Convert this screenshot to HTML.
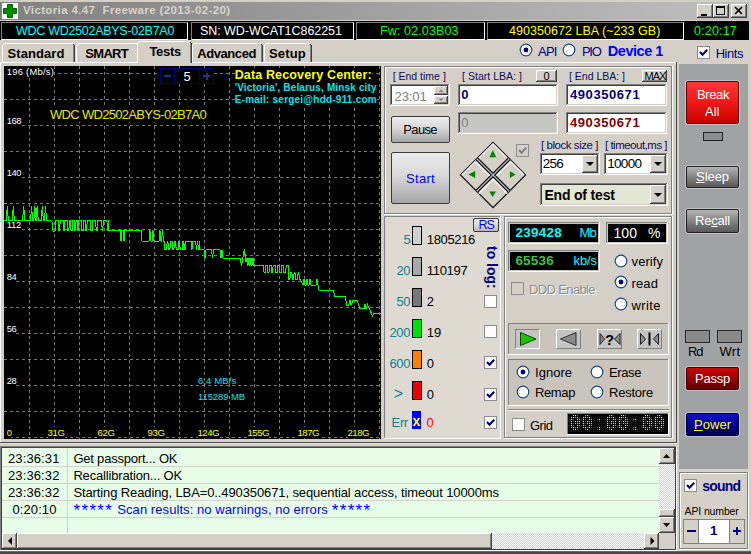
<!DOCTYPE html>
<html><head><meta charset="utf-8"><title>Victoria 4.47</title><style>
html,body{margin:0;padding:0}
body{width:751px;height:554px;overflow:hidden;background:#d4d0c8;position:relative;font-family:'Liberation Sans', sans-serif;}
#app{position:absolute;left:0;top:0;width:751px;height:554px;overflow:hidden;background:#d4d0c8}
#app div,#app span,#app svg{position:absolute;box-sizing:border-box}
#app span{white-space:pre}
</style></head><body><div id="app">
<div style="left:0px;top:2px;width:751px;height:18px;background:linear-gradient(90deg,#808080 0%,#c0c0c0 100%)"></div>
<div style="left:2px;top:3px;width:16px;height:16px;background:#fff"></div>
<svg style="left:2px;top:3px" width="16" height="16" viewBox="0 0 16 16"><path d="M5.500 1.500h5v4h4v5h-4v4h-5v-4h-4v-5h4z" fill="#008a00" stroke="#006400" stroke-width="1"/></svg>
<span style="left:23.0px;top:4.1px;font-size:11.5px;line-height:13.5px;color:#d8d4cc;font-weight:bold;letter-spacing:0.37px;">Victoria 4.47  Freeware (2013-02-20)</span>
<div style="left:697px;top:4px;width:16px;height:14px;background:#404040"></div>
<div style="left:697px;top:4px;width:15px;height:13px;background:#fff"></div>
<div style="left:698px;top:5px;width:14px;height:12px;background:#808080"></div>
<div style="left:698px;top:5px;width:13px;height:11px;background:#d4d0c8"></div>
<div style="left:713px;top:4px;width:16px;height:14px;background:#404040"></div>
<div style="left:713px;top:4px;width:15px;height:13px;background:#fff"></div>
<div style="left:714px;top:5px;width:14px;height:12px;background:#808080"></div>
<div style="left:714px;top:5px;width:13px;height:11px;background:#d4d0c8"></div>
<div style="left:731px;top:4px;width:16px;height:14px;background:#404040"></div>
<div style="left:731px;top:4px;width:15px;height:13px;background:#fff"></div>
<div style="left:732px;top:5px;width:14px;height:12px;background:#808080"></div>
<div style="left:732px;top:5px;width:13px;height:11px;background:#d4d0c8"></div>
<div style="left:701px;top:14px;width:6px;height:2px;background:#000"></div>
<div style="left:716px;top:6px;width:9px;height:9px;border:1px solid #000;border-top:2px solid #000"></div>
<svg style="left:731px;top:4px" width="16" height="14"><path d="M4 3l7 7M11 3l-7 7" stroke="#000" stroke-width="1.6" fill="none"/></svg>
<div style="left:0px;top:21px;width:751px;height:19px;background:#000"></div>
<div style="left:1px;top:22px;width:187px;height:18px;border:1px solid #fff;border-top-color:#808080;border-left-color:#808080"></div>
<div style="left:191px;top:22px;width:163px;height:18px;border:1px solid #fff;border-top-color:#808080;border-left-color:#808080"></div>
<div style="left:356px;top:22px;width:129px;height:18px;border:1px solid #fff;border-top-color:#808080;border-left-color:#808080"></div>
<div style="left:487px;top:22px;width:197px;height:18px;border:1px solid #fff;border-top-color:#808080;border-left-color:#808080"></div>
<span style="left:16.0px;top:24.2px;font-size:12.5px;line-height:14.5px;color:#00ffff;letter-spacing:-0.28px;">WDC WD2502ABYS-02B7A0</span>
<span style="left:200.0px;top:24.2px;font-size:12.5px;line-height:14.5px;color:#ffffff;letter-spacing:-0.05px;">SN: WD-WCAT1C862251</span>
<span style="left:380.0px;top:24.2px;font-size:12.5px;line-height:14.5px;color:#00ff00;letter-spacing:0.12px;">Fw: 02.03B03</span>
<span style="left:509.0px;top:24.2px;font-size:12.5px;line-height:14.5px;color:#ffff00;letter-spacing:0.04px;">490350672 LBA (~233 GB)</span>
<span style="left:694.0px;top:24.2px;font-size:12.5px;line-height:14.5px;color:#00ff00;letter-spacing:0.18px;">0:20:17</span>
<div style="left:0px;top:62px;width:677px;height:1px;background:#fff"></div>
<div style="left:2px;top:45px;width:1px;height:17px;background:#fff"></div>
<div style="left:3px;top:44px;width:1px;height:1px;background:#fff"></div>
<div style="left:4px;top:43px;width:69px;height:1px;background:#fff"></div>
<div style="left:73px;top:44px;width:1px;height:1px;background:#404040"></div>
<div style="left:74px;top:45px;width:1px;height:17px;background:#404040"></div>
<div style="left:73px;top:45px;width:1px;height:17px;background:#808080"></div>
<span style="left:7.6px;top:45.8px;font-size:13px;line-height:15px;color:#000;font-weight:bold;letter-spacing:0.07px;">Standard</span>
<div style="left:76px;top:45px;width:1px;height:17px;background:#fff"></div>
<div style="left:77px;top:44px;width:1px;height:1px;background:#fff"></div>
<div style="left:78px;top:43px;width:59px;height:1px;background:#fff"></div>
<div style="left:137px;top:44px;width:1px;height:1px;background:#404040"></div>
<div style="left:138px;top:45px;width:1px;height:17px;background:#404040"></div>
<div style="left:137px;top:45px;width:1px;height:17px;background:#808080"></div>
<span style="left:85.3px;top:45.8px;font-size:13px;line-height:15px;color:#000;font-weight:bold;letter-spacing:-0.70px;">SMART</span>
<div style="left:192px;top:45px;width:1px;height:17px;background:#fff"></div>
<div style="left:193px;top:44px;width:1px;height:1px;background:#fff"></div>
<div style="left:194px;top:43px;width:67px;height:1px;background:#fff"></div>
<div style="left:261px;top:44px;width:1px;height:1px;background:#404040"></div>
<div style="left:262px;top:45px;width:1px;height:17px;background:#404040"></div>
<div style="left:261px;top:45px;width:1px;height:17px;background:#808080"></div>
<span style="left:197.2px;top:45.8px;font-size:13px;line-height:15px;color:#000;font-weight:bold;letter-spacing:-0.42px;">Advanced</span>
<div style="left:264px;top:45px;width:1px;height:17px;background:#fff"></div>
<div style="left:265px;top:44px;width:1px;height:1px;background:#fff"></div>
<div style="left:266px;top:43px;width:44px;height:1px;background:#fff"></div>
<div style="left:310px;top:44px;width:1px;height:1px;background:#404040"></div>
<div style="left:311px;top:45px;width:1px;height:17px;background:#404040"></div>
<div style="left:310px;top:45px;width:1px;height:17px;background:#808080"></div>
<span style="left:269.0px;top:45.8px;font-size:13px;line-height:15px;color:#000;font-weight:bold;letter-spacing:0.14px;">Setup</span>
<div style="left:137px;top:41px;width:55px;height:22px;background:#d4d0c8"></div>
<div style="left:137px;top:43px;width:1px;height:20px;background:#fff"></div>
<div style="left:138px;top:42px;width:1px;height:1px;background:#fff"></div>
<div style="left:139px;top:41px;width:51px;height:1px;background:#fff"></div>
<div style="left:190px;top:42px;width:1px;height:1px;background:#404040"></div>
<div style="left:191px;top:43px;width:1px;height:20px;background:#404040"></div>
<div style="left:190px;top:43px;width:1px;height:20px;background:#808080"></div>
<span style="left:149.4px;top:43.8px;font-size:13px;line-height:15px;color:#000;font-weight:bold;letter-spacing:-0.28px;">Tests</span>
<svg style="left:517.7px;top:42.4px" width="16" height="16"><circle cx="8" cy="8" r="5.8" fill="#fff" stroke="#1c4a80" stroke-width="1.2"/><circle cx="8" cy="8" r="2.4" fill="#000080"/></svg>
<span style="left:538.0px;top:43.7px;font-size:13px;line-height:15px;color:#000080;letter-spacing:-0.79px;">API</span>
<svg style="left:561.3px;top:42.4px" width="16" height="16"><circle cx="8" cy="8" r="5.8" fill="#fff" stroke="#1c4a80" stroke-width="1.2"/></svg>
<span style="left:581.9px;top:43.7px;font-size:13px;line-height:15px;color:#000080;letter-spacing:-1.20px;">PIO</span>
<span style="left:607.8px;top:42.7px;font-size:14.5px;line-height:16.5px;color:#0000ff;font-weight:bold;letter-spacing:-0.46px;">Device 1</span>
<div style="left:697px;top:46px;width:13px;height:13px;background:#fff;border:1px solid #8c8c8c"></div>
<svg style="left:697px;top:46px" width="13" height="13"><path d="M3 6l2.500 2.700l4.700-5" stroke="#000080" stroke-width="2.100" fill="none"/></svg>
<span style="left:715.7px;top:45.5px;font-size:13px;line-height:15px;color:#000080;letter-spacing:-0.47px;">Hints</span>
<div style="left:0px;top:63px;width:1px;height:380px;background:#fff"></div>
<div style="left:4px;top:66px;width:377px;height:373px;background:#000"></div>
<svg style="left:4px;top:66px" width="377" height="373" viewBox="0 0 377 373"><g stroke="#787878" stroke-width="1" stroke-dasharray="3 3" fill="none" shape-rendering="crispEdges"><path d="M0 7.5H377"/><path d="M0 33.5H377"/><path d="M0 59.5H377"/><path d="M0 85.5H377"/><path d="M0 111.5H377"/><path d="M0 137.5H377"/><path d="M0 163.5H377"/><path d="M0 189.5H377"/><path d="M0 215.5H377"/><path d="M0 241.5H377"/><path d="M0 267.5H377"/><path d="M0 293.5H377"/><path d="M0 319.5H377"/><path d="M0 345.5H377"/><path d="M0 371.5H377"/><path d="M25.5 0V373"/><path d="M50.5 0V373"/><path d="M75.5 0V373"/><path d="M100.5 0V373"/><path d="M125.5 0V373"/><path d="M150.5 0V373"/><path d="M175.5 0V373"/><path d="M200.5 0V373"/><path d="M225.5 0V373"/><path d="M250.5 0V373"/><path d="M275.5 0V373"/><path d="M300.5 0V373"/><path d="M325.5 0V373"/><path d="M350.5 0V373"/><path d="M375.5 0V373"/></g></svg>
<span style="left:6.7px;top:66.1px;font-size:9.4px;line-height:11.4px;color:#fff;letter-spacing:0.27px;background:#000;padding-left:3px;margin-left:-3px;">196 (Mb/s)</span>
<span style="left:6.7px;top:115.1px;font-size:9.4px;line-height:11.4px;color:#fff;letter-spacing:-0.45px;background:#000;padding-left:3px;margin-left:-3px;">168</span>
<span style="left:6.7px;top:167.1px;font-size:9.4px;line-height:11.4px;color:#fff;letter-spacing:-0.45px;background:#000;padding-left:3px;margin-left:-3px;">140</span>
<span style="left:6.7px;top:219.1px;font-size:9.4px;line-height:11.4px;color:#fff;letter-spacing:-0.22px;background:#000;padding-left:3px;margin-left:-3px;">112</span>
<span style="left:6.7px;top:271.1px;font-size:9.4px;line-height:11.4px;color:#fff;letter-spacing:-0.47px;background:#000;padding-left:3px;margin-left:-3px;">84</span>
<span style="left:6.7px;top:323.1px;font-size:9.4px;line-height:11.4px;color:#fff;letter-spacing:-0.47px;background:#000;padding-left:3px;margin-left:-3px;">56</span>
<span style="left:6.7px;top:375.4px;font-size:9.4px;line-height:11.4px;color:#fff;letter-spacing:-0.47px;background:#000;padding-left:3px;margin-left:-3px;">28</span>
<span style="left:6.7px;top:427.4px;font-size:9.4px;line-height:11.4px;color:#ffff00;letter-spacing:-0.42px;background:#000;padding-left:3px;margin-left:-3px;">0</span>
<span style="left:47.5px;top:426.7px;font-size:9.6px;line-height:11.6px;color:#ffff00;letter-spacing:-0.38px;background:#000;">31G</span>
<span style="left:97.5px;top:426.7px;font-size:9.6px;line-height:11.6px;color:#ffff00;letter-spacing:-0.38px;background:#000;">62G</span>
<span style="left:147.5px;top:426.7px;font-size:9.6px;line-height:11.6px;color:#ffff00;letter-spacing:-0.38px;background:#000;">93G</span>
<span style="left:197.5px;top:426.7px;font-size:9.6px;line-height:11.6px;color:#ffff00;letter-spacing:-0.52px;background:#000;">124G</span>
<span style="left:247.5px;top:426.7px;font-size:9.6px;line-height:11.6px;color:#ffff00;letter-spacing:-0.52px;background:#000;">155G</span>
<span style="left:297.5px;top:426.7px;font-size:9.6px;line-height:11.6px;color:#ffff00;letter-spacing:-0.52px;background:#000;">187G</span>
<span style="left:347.5px;top:426.7px;font-size:9.6px;line-height:11.6px;color:#ffff00;letter-spacing:-0.52px;background:#000;">218G</span>
<span style="left:198.0px;top:374.7px;font-size:9.6px;line-height:11.6px;color:#00e0f0;letter-spacing:0.06px;">6,4 MB/s</span>
<span style="left:198.0px;top:390.6px;font-size:9.6px;line-height:11.6px;color:#00e0f0;letter-spacing:-0.15px;">115289 MB</span>
<span style="left:50.0px;top:107.0px;font-size:13px;line-height:15px;color:#e8e800;letter-spacing:-0.69px;background:#000;">WDC WD2502ABYS-02B7A0</span>
<span style="left:234.7px;top:68.1px;font-size:12.5px;line-height:14.5px;color:#ffff00;font-weight:bold;letter-spacing:0.14px;background:#000;">Data Recovery Center:</span>
<span style="left:234.7px;top:81.7px;font-size:10px;line-height:12px;color:#00e5ee;font-weight:bold;letter-spacing:0.15px;background:#000;">&#x27;Victoria&#x27;, Belarus, Minsk city</span>
<span style="left:234.7px;top:93.8px;font-size:10px;line-height:12px;color:#00e5ee;font-weight:bold;letter-spacing:0.22px;background:#000;">E-mail: sergei@hdd-911.com</span>
<svg style="left:4px;top:66px" width="377" height="373" viewBox="0 0 377 373"><polyline points="0.0,154.0 2.3,154.0 3.3,140.0 4.3,154.0 8.3,154.0 9.3,140.0 10.3,154.0 18.7,154.0 19.7,140.0 20.7,154.0 26.6,154.0 27.6,140.0 28.6,154.0 29.9,154.0 30.9,140.0 31.9,154.0 32.2,154.0 33.2,140.0 34.2,154.0 37.3,154.0 38.3,140.0 39.3,154.0 40.5,154.0 41.5,140.0 42.5,154.0 46.0,154.0 48.0,156.0 49.0,165.0 51.0,165.0 52.0,154.0 52.0,154.0 54.5,154.0 55.0,164.6 55.7,164.6 56.2,154.0 59.2,154.0 59.7,164.6 60.3,164.6 60.8,154.0 63.4,154.0 63.9,164.6 64.9,164.6 65.4,154.0 66.6,154.0 67.1,164.6 68.4,164.6 68.9,154.0 70.0,154.0 70.5,164.6 71.6,164.6 72.1,154.0 73.3,154.0 73.8,164.6 74.5,164.6 75.0,154.0 77.2,154.0 77.7,164.6 79.5,164.6 80.0,154.0 81.3,154.0 81.8,164.6 82.7,164.6 83.2,154.0 86.1,154.0 86.6,164.6 88.5,164.6 89.0,154.0 91.7,154.0 92.2,164.6 93.3,164.6 93.8,154.0 97.7,154.0 98.2,164.6 98.8,164.6 99.3,154.0 102.9,154.0 103.4,164.6 104.0,164.6 104.0,154.0 104.7,164.3 116.0,164.3 117.0,175.0 118.0,164.3 119.0,164.3 120.0,175.0 121.0,164.3 137.0,164.3 138.0,175.0 145.0,175.0 146.0,164.5 147.0,175.0 148.0,175.0 149.0,164.5 150.0,175.0 155.0,175.0 156.0,164.5 157.0,175.0 157.5,175.0 158.5,164.5 159.5,175.0 160.0,175.0 161.0,183.6 161.0,183.6 162.7,183.6 163.2,175.0 163.9,175.0 164.4,183.6 165.9,183.6 166.4,175.0 168.1,175.0 168.6,183.6 169.9,183.6 170.4,175.0 171.7,175.0 172.2,183.6 174.2,183.6 174.7,175.0 175.7,175.0 176.2,183.6 178.1,183.6 178.6,175.0 179.2,175.0 179.7,183.6 180.7,183.6 181.2,175.0 181.0,175.0 181.0,183.6 182.0,175.0 187.0,175.0 188.0,183.6 189.0,175.0 191.5,175.0 192.5,183.6 193.5,175.0 193.5,175.0 194.5,183.6 195.5,175.0 195.0,175.0 196.0,183.6 200.0,183.6 201.0,192.3 202.0,183.6 207.5,183.6 208.5,192.3 209.5,183.6 216.0,183.6 217.0,192.3 218.0,183.6 218.0,183.6 219.0,192.3 236.0,192.3 237.5,199.6 240.3,183.0 242.0,196.0 243.0,192.3 244.0,199.6 245.0,192.3 245.0,192.3 246.0,199.6 247.0,192.3 247.0,192.3 248.0,199.6 249.0,192.3 249.0,192.3 250.0,199.6 257.0,199.6 257.0,199.6 259.5,199.6 260.0,206.4 261.2,206.4 261.7,199.6 263.1,199.6 263.6,206.4 265.0,206.4 265.5,199.6 267.2,199.6 267.7,206.4 268.6,206.4 269.1,199.6 271.3,199.6 271.8,206.4 273.4,206.4 273.9,199.6 275.2,199.6 275.7,206.4 277.1,206.4 277.6,199.6 279.4,199.6 279.9,206.4 281.7,206.4 282.2,199.6 284.0,199.6 284.0,199.6 284.0,206.5 284.0,213.5 285.9,213.5 286.4,206.5 287.9,206.5 288.4,213.5 289.6,213.5 290.1,206.5 291.0,206.5 291.5,213.5 293.6,213.5 294.1,206.5 294.8,206.5 295.3,213.5 296.0,213.5 296.0,213.5 296.5,213.5 299.0,219.0 300.0,213.5 301.0,219.0 302.0,219.0 303.0,213.5 304.0,219.0 305.0,219.0 306.0,213.5 307.0,219.0 312.0,219.0 313.0,213.5 314.0,219.0 314.0,219.0 315.0,224.0 329.5,224.0 330.5,230.5 341.5,230.5 342.5,239.3 344.5,239.3 346.0,234.5 347.0,239.0 349.0,234.5 353.0,234.5 356.0,242.8 360.0,242.8 361.0,238.0 362.0,242.8 363.5,238.5 365.0,242.0 368.5,249.8 370.0,247.3 376.5,247.3" fill="none" stroke="#00ff00" stroke-width="1" stroke-linejoin="miter" shape-rendering="crispEdges"/></svg>
<div style="left:160px;top:68px;width:54px;height:16px;border:1px solid #000080;background:#000"></div>
<div style="left:174px;top:68px;width:1px;height:16px;background:#000080"></div>
<div style="left:199px;top:68px;width:1px;height:16px;background:#000080"></div>
<div style="left:164px;top:75px;width:7px;height:2px;background:#203090"></div>
<div style="left:203px;top:75px;width:7px;height:2px;background:#203090"></div>
<div style="left:205.5px;top:72.5px;width:2.0px;height:7.0px;background:#203090"></div>
<span style="left:183.5px;top:69.0px;font-size:13px;line-height:15px;color:#fff;letter-spacing:0.00px;">5</span>
<div style="left:676px;top:62px;width:1px;height:381px;background:#484848"></div>
<div style="left:0px;top:442px;width:677px;height:1px;background:#505050"></div>
<div style="left:0px;top:443px;width:677px;height:1px;background:#e6e2da"></div>
<div style="left:384px;top:66px;width:289px;height:149px;background:#fff"></div>
<div style="left:384px;top:66px;width:288px;height:148px;background:#808080"></div>
<div style="left:385px;top:67px;width:286px;height:146px;background:#fff"></div>
<div style="left:386px;top:68px;width:285px;height:145px;background:#d4d0c8"></div>
<span style="left:392.7px;top:69.9px;font-size:10.5px;line-height:12.5px;color:#0c0c58;letter-spacing:-0.00px;">[ End time ]</span>
<div style="left:390px;top:84px;width:60px;height:22px;background:#fff"></div>
<div style="left:390px;top:84px;width:59px;height:21px;background:#808080"></div>
<div style="left:391px;top:85px;width:58px;height:20px;background:#d4d0c8"></div>
<div style="left:391px;top:85px;width:57px;height:19px;background:#404040"></div>
<div style="left:392px;top:86px;width:56px;height:18px;background:#fff"></div>
<span style="left:394.6px;top:88.6px;font-size:13px;line-height:15px;color:#808080;letter-spacing:-0.13px;">23:01</span>
<div style="left:434px;top:86px;width:14px;height:9px;background:#404040"></div>
<div style="left:434px;top:86px;width:13px;height:8px;background:#fff"></div>
<div style="left:435px;top:87px;width:12px;height:7px;background:#808080"></div>
<div style="left:435px;top:87px;width:11px;height:6px;background:#d4d0c8"></div>
<div style="left:434px;top:96px;width:14px;height:8px;background:#404040"></div>
<div style="left:434px;top:96px;width:13px;height:7px;background:#fff"></div>
<div style="left:435px;top:97px;width:12px;height:6px;background:#808080"></div>
<div style="left:435px;top:97px;width:11px;height:5px;background:#d4d0c8"></div>
<svg style="left:434px;top:86px" width="14" height="19"><path d="M4.500 6L7 3.500L9.500 6zM4.500 12.500L7 15L9.500 12.500z" fill="#808080"/></svg>
<span style="left:462.0px;top:69.9px;font-size:10.5px;line-height:12.5px;color:#0c0c58;letter-spacing:0.03px;">[ Start LBA: ]</span>
<div style="left:536px;top:70px;width:21px;height:12px;background:#404040"></div>
<div style="left:536px;top:70px;width:20px;height:11px;background:#fff"></div>
<div style="left:537px;top:71px;width:19px;height:10px;background:#808080"></div>
<div style="left:537px;top:71px;width:18px;height:9px;background:#d4d0c8"></div>
<span style="left:543.5px;top:69.7px;font-size:11px;line-height:13px;color:#000;letter-spacing:0.00px;">0</span>
<div style="left:458px;top:84px;width:100px;height:22px;background:#fff"></div>
<div style="left:458px;top:84px;width:99px;height:21px;background:#808080"></div>
<div style="left:459px;top:85px;width:98px;height:20px;background:#d4d0c8"></div>
<div style="left:459px;top:85px;width:97px;height:19px;background:#404040"></div>
<div style="left:460px;top:86px;width:96px;height:18px;background:#fff"></div>
<span style="left:461.3px;top:87.2px;font-size:13px;line-height:15px;color:#000080;font-weight:bold;letter-spacing:0.47px;">0</span>
<span style="left:569.0px;top:69.9px;font-size:10.5px;line-height:12.5px;color:#0c0c58;letter-spacing:-0.00px;">[ End LBA: ]</span>
<div style="left:642px;top:70px;width:25px;height:12px;background:#404040"></div>
<div style="left:642px;top:70px;width:24px;height:11px;background:#fff"></div>
<div style="left:643px;top:71px;width:23px;height:10px;background:#808080"></div>
<div style="left:643px;top:71px;width:22px;height:9px;background:#d4d0c8"></div>
<span style="left:644.5px;top:69.7px;font-size:11px;line-height:13px;color:#000;letter-spacing:-0.95px;">MAX</span>
<div style="left:566px;top:84px;width:101px;height:22px;background:#fff"></div>
<div style="left:566px;top:84px;width:100px;height:21px;background:#808080"></div>
<div style="left:567px;top:85px;width:99px;height:20px;background:#d4d0c8"></div>
<div style="left:567px;top:85px;width:98px;height:19px;background:#404040"></div>
<div style="left:568px;top:86px;width:97px;height:18px;background:#fff"></div>
<span style="left:570.0px;top:87.4px;font-size:13px;line-height:15px;color:#000080;font-weight:bold;letter-spacing:0.57px;">490350671</span>
<div style="left:391px;top:116px;width:59px;height:27px;border:1px solid #3c3c3c;border-radius:2px;background:linear-gradient(180deg,#ececec 0%,#d8d8d8 45%,#a4a4a4 100%)"></div>
<span style="left:403.3px;top:121.7px;font-size:13px;line-height:15px;color:#000;letter-spacing:-0.64px;">Pause</span>
<div style="left:458px;top:112px;width:100px;height:22px;background:#fff"></div>
<div style="left:458px;top:112px;width:99px;height:21px;background:#808080"></div>
<div style="left:459px;top:113px;width:98px;height:20px;background:#d4d0c8"></div>
<div style="left:459px;top:113px;width:97px;height:19px;background:#404040"></div>
<div style="left:460px;top:114px;width:96px;height:18px;background:#c6c6c2"></div>
<span style="left:461.3px;top:115.2px;font-size:13px;line-height:15px;color:#808080;letter-spacing:-0.03px;">0</span>
<div style="left:566px;top:112px;width:101px;height:22px;background:#fff"></div>
<div style="left:566px;top:112px;width:100px;height:21px;background:#808080"></div>
<div style="left:567px;top:113px;width:99px;height:20px;background:#d4d0c8"></div>
<div style="left:567px;top:113px;width:98px;height:19px;background:#404040"></div>
<div style="left:568px;top:114px;width:97px;height:18px;background:#fff"></div>
<span style="left:570.0px;top:115.2px;font-size:13px;line-height:15px;color:#800000;font-weight:bold;letter-spacing:0.57px;">490350671</span>
<div style="left:391px;top:152px;width:59px;height:52px;border:1px solid #3c3c3c;border-radius:2px;background:linear-gradient(180deg,#ececec 0%,#d8d8d8 45%,#a4a4a4 100%)"></div>
<span style="left:406.0px;top:170.7px;font-size:13px;line-height:15px;color:#0000ff;letter-spacing:0.31px;">Start</span>
<svg style="left:458px;top:140px" width="70" height="70" viewBox="-35 -35 70 70">
<g transform="rotate(45)">
<rect x="-23" y="-23" width="46" height="46" fill="#d4d0c8" stroke="#101010" stroke-width="1.2"/>
<path d="M-22 22V-22H22" fill="none" stroke="#fff" stroke-width="1.2"/>
<path d="M1.800 22V1.800H22M-22 1.800H-1M1.800 -22V-1" fill="none" stroke="#fff" stroke-width="1.2" transform="translate(1.200 1.200)"/>
<path d="M0 -23V23M-23 0H23" stroke="#101010" stroke-width="3.800"/>
<path d="M0 -23V23M-23 0H23" stroke="#b8b8b8" stroke-width="1.300"/>
</g>
<path d="M-0.200 -24.700l3.400 7h-6.800z M-0.400 22l3.300 -5.500h-6.600z M-24.400 -0.400l6.600 -3.500v7z M22.500 -0.400l-5.600 -3.300v6.600z" fill="#008000"/>
</svg>
<div style="left:516px;top:144px;width:13px;height:13px;background:#d4d0c8;border:1px solid #8c8c8c"></div>
<svg style="left:516px;top:144px" width="13" height="13"><path d="M3 6l2.500 2.700l4.700-5" stroke="#808080" stroke-width="2.100" fill="none"/></svg>
<span style="left:541.0px;top:139.3px;font-size:11.5px;line-height:13.5px;color:#0c0c58;letter-spacing:-0.45px;">[ block size ]</span>
<span style="left:605.0px;top:139.3px;font-size:11.5px;line-height:13.5px;color:#0c0c58;letter-spacing:-0.50px;">[ timeout,ms ]</span>
<div style="left:540px;top:153px;width:60px;height:22px;background:#fff"></div>
<div style="left:540px;top:153px;width:59px;height:21px;background:#808080"></div>
<div style="left:541px;top:154px;width:58px;height:20px;background:#d4d0c8"></div>
<div style="left:541px;top:154px;width:57px;height:19px;background:#404040"></div>
<div style="left:542px;top:155px;width:56px;height:18px;background:#fff"></div>
<div style="left:582px;top:155px;width:16px;height:18px;background:#404040"></div>
<div style="left:582px;top:155px;width:15px;height:17px;background:#fff"></div>
<div style="left:583px;top:156px;width:14px;height:16px;background:#808080"></div>
<div style="left:583px;top:156px;width:13px;height:15px;background:#d4d0c8"></div>
<svg style="left:585px;top:161.0px" width="10" height="6"><path d="M1 1h8l-4 4z" fill="#000"/></svg>
<span style="left:542.8px;top:156.1px;font-size:13.5px;line-height:15.5px;color:#000;letter-spacing:-0.78px;">256</span>
<div style="left:604px;top:153px;width:64px;height:22px;background:#fff"></div>
<div style="left:604px;top:153px;width:63px;height:21px;background:#808080"></div>
<div style="left:605px;top:154px;width:62px;height:20px;background:#d4d0c8"></div>
<div style="left:605px;top:154px;width:61px;height:19px;background:#404040"></div>
<div style="left:606px;top:155px;width:60px;height:18px;background:#fff"></div>
<div style="left:650px;top:155px;width:16px;height:18px;background:#404040"></div>
<div style="left:650px;top:155px;width:15px;height:17px;background:#fff"></div>
<div style="left:651px;top:156px;width:14px;height:16px;background:#808080"></div>
<div style="left:651px;top:156px;width:13px;height:15px;background:#d4d0c8"></div>
<svg style="left:653px;top:161.0px" width="10" height="6"><path d="M1 1h8l-4 4z" fill="#000"/></svg>
<span style="left:607.2px;top:156.1px;font-size:13.5px;line-height:15.5px;color:#000;letter-spacing:-0.67px;">10000</span>
<div style="left:540px;top:183px;width:128px;height:23px;background:#fff"></div>
<div style="left:540px;top:183px;width:127px;height:22px;background:#808080"></div>
<div style="left:541px;top:184px;width:126px;height:21px;background:#d4d0c8"></div>
<div style="left:541px;top:184px;width:125px;height:20px;background:#404040"></div>
<div style="left:542px;top:185px;width:124px;height:19px;background:#e4e6d4"></div>
<div style="left:650px;top:185px;width:16px;height:19px;background:#404040"></div>
<div style="left:650px;top:185px;width:15px;height:18px;background:#fff"></div>
<div style="left:651px;top:186px;width:14px;height:17px;background:#808080"></div>
<div style="left:651px;top:186px;width:13px;height:16px;background:#d4d0c8"></div>
<svg style="left:653px;top:191.5px" width="10" height="6"><path d="M1 1h8l-4 4z" fill="#000"/></svg>
<span style="left:544.4px;top:186.6px;font-size:14px;line-height:16px;color:#000;font-weight:bold;letter-spacing:-0.18px;">End of test</span>
<div style="left:384px;top:216px;width:117px;height:223px;background:#fff"></div>
<div style="left:384px;top:216px;width:116px;height:222px;background:#808080"></div>
<div style="left:385px;top:217px;width:115px;height:221px;background:#dedad2"></div>
<div style="left:473px;top:218px;width:26px;height:14px;border:1px solid #3c3c3c;border-radius:2px;background:linear-gradient(180deg,#ececec 0%,#dcdad6 50%,#bcb8b0 100%)"></div>
<span style="left:478.6px;top:218.0px;font-size:12.5px;line-height:14.5px;color:#0000ff;letter-spacing:-1.19px;">RS</span>
<div style="left:412px;top:226px;width:10px;height:19px;background:#d0d0d0;border:1px solid #000"></div>
<span style="left:426.8px;top:231.7px;font-size:13px;line-height:15px;color:#000;letter-spacing:-0.35px;">1805216</span>
<div style="left:412px;top:257px;width:10px;height:19px;background:#a8a8ac;border:1px solid #000"></div>
<span style="left:426.8px;top:262.7px;font-size:13px;line-height:15px;color:#000;letter-spacing:-0.32px;">110197</span>
<div style="left:412px;top:288px;width:10px;height:19px;background:#787878;border:1px solid #000"></div>
<span style="left:426.8px;top:293.7px;font-size:13px;line-height:15px;color:#000;letter-spacing:0.00px;">2</span>
<div style="left:412px;top:319px;width:10px;height:19px;background:#00e400;border:1px solid #000"></div>
<span style="left:426.8px;top:324.7px;font-size:13px;line-height:15px;color:#000;letter-spacing:0.00px;">19</span>
<div style="left:412px;top:350px;width:10px;height:19px;background:#ff8000;border:1px solid #000"></div>
<span style="left:426.8px;top:355.7px;font-size:13px;line-height:15px;color:#000;letter-spacing:0.00px;">0</span>
<div style="left:412px;top:381px;width:10px;height:19px;background:#ee0000;border:1px solid #000"></div>
<span style="left:426.8px;top:386.7px;font-size:13px;line-height:15px;color:#000;letter-spacing:0.00px;">0</span>
<span style="left:403.5px;top:231.6px;font-size:13px;line-height:15px;color:#0c8090;letter-spacing:-0.73px;">5</span>
<span style="left:396.5px;top:262.6px;font-size:13px;line-height:15px;color:#0c8090;letter-spacing:-0.48px;">20</span>
<span style="left:396.5px;top:293.6px;font-size:13px;line-height:15px;color:#0c8090;letter-spacing:-0.48px;">50</span>
<span style="left:389.5px;top:324.6px;font-size:13px;line-height:15px;color:#0c8090;letter-spacing:-0.40px;">200</span>
<span style="left:389.5px;top:355.6px;font-size:13px;line-height:15px;color:#0c8090;letter-spacing:-0.40px;">600</span>
<span style="left:393.8px;top:384.8px;font-size:16px;line-height:18px;color:#0c8090;letter-spacing:-1.20px;">&gt;</span>
<span style="left:391.6px;top:415.0px;font-size:13px;line-height:15px;color:#0c8090;letter-spacing:-0.38px;">Err</span>
<div style="left:412px;top:411px;width:9px;height:18px;background:#0000ff"></div>
<span style="left:412.5px;top:413.1px;font-size:14px;line-height:16px;color:#ffff00;font-weight:bold;letter-spacing:0.20px;">x</span>
<span style="left:426.6px;top:415.0px;font-size:13px;line-height:15px;color:#ff0000;letter-spacing:0.00px;">0</span>
<div style="left:484px;top:295px;width:13px;height:13px;background:#fff;border:1px solid #8c8c8c"></div>
<div style="left:484px;top:325px;width:13px;height:13px;background:#fff;border:1px solid #8c8c8c"></div>
<div style="left:484px;top:356px;width:13px;height:13px;background:#fff;border:1px solid #8c8c8c"></div>
<svg style="left:484px;top:356px" width="13" height="13"><path d="M3 6l2.500 2.700l4.700-5" stroke="#000080" stroke-width="2.100" fill="none"/></svg>
<div style="left:484px;top:388px;width:13px;height:13px;background:#fff;border:1px solid #8c8c8c"></div>
<svg style="left:484px;top:388px" width="13" height="13"><path d="M3 6l2.500 2.700l4.700-5" stroke="#000080" stroke-width="2.100" fill="none"/></svg>
<div style="left:484px;top:416px;width:13px;height:13px;background:#fff;border:1px solid #8c8c8c"></div>
<svg style="left:484px;top:416px" width="13" height="13"><path d="M3 6l2.500 2.700l4.700-5" stroke="#000080" stroke-width="2.100" fill="none"/></svg>
<span style="left:484.5px;top:246px;width:14px;height:48px;font-size:14px;font-weight:bold;color:#000080;line-height:14px;writing-mode:vertical-rl;letter-spacing:0px">to log:</span>
<div style="left:504px;top:216px;width:169px;height:223px;background:#fff"></div>
<div style="left:504px;top:216px;width:168px;height:222px;background:#808080"></div>
<div style="left:505px;top:217px;width:166px;height:220px;background:#fff"></div>
<div style="left:506px;top:218px;width:165px;height:219px;background:#d4d0c8"></div>
<div style="left:508px;top:222px;width:92px;height:22px;background:#fff"></div>
<div style="left:508px;top:222px;width:91px;height:21px;background:#808080"></div>
<div style="left:509px;top:223px;width:90px;height:20px;background:#c8c4bc"></div>
<div style="left:510px;top:224px;width:88px;height:18px;background:#000"></div>
<span style="left:515.4px;top:224.9px;font-size:13.5px;line-height:15.5px;color:#00ffff;font-weight:bold;letter-spacing:0.26px;">239428</span>
<span style="left:579.5px;top:225.3px;font-size:13px;line-height:15px;color:#00ffff;letter-spacing:-0.78px;">Mb</span>
<div style="left:606px;top:222px;width:62px;height:22px;background:#fff"></div>
<div style="left:606px;top:222px;width:61px;height:21px;background:#808080"></div>
<div style="left:607px;top:223px;width:60px;height:20px;background:#c8c4bc"></div>
<div style="left:608px;top:224px;width:58px;height:18px;background:#000"></div>
<span style="left:613.5px;top:224.9px;font-size:14px;line-height:16px;color:#fff;letter-spacing:0.05px;">100</span>
<span style="left:648.0px;top:224.9px;font-size:14px;line-height:16px;color:#fff;letter-spacing:1.50px;">%</span>
<div style="left:508px;top:250px;width:92px;height:22px;background:#fff"></div>
<div style="left:508px;top:250px;width:91px;height:21px;background:#808080"></div>
<div style="left:509px;top:251px;width:90px;height:20px;background:#c8c4bc"></div>
<div style="left:510px;top:252px;width:88px;height:18px;background:#000"></div>
<span style="left:515.4px;top:252.9px;font-size:13.5px;line-height:15.5px;color:#40c040;font-weight:bold;letter-spacing:0.21px;">65536</span>
<span style="left:573.5px;top:253.3px;font-size:13px;line-height:15px;color:#00ffff;letter-spacing:-0.09px;">kb/s</span>
<svg style="left:612.7px;top:252.8px" width="16" height="16"><circle cx="8" cy="8" r="5.8" fill="#fff" stroke="#1c4a80" stroke-width="1.2"/></svg>
<span style="left:631.6px;top:253.5px;font-size:13px;line-height:15px;color:#000;letter-spacing:0.06px;">verify</span>
<svg style="left:612.7px;top:274.4px" width="16" height="16"><circle cx="8" cy="8" r="5.8" fill="#fff" stroke="#1c4a80" stroke-width="1.2"/><circle cx="8" cy="8" r="2.4" fill="#000080"/></svg>
<span style="left:631.6px;top:275.5px;font-size:13px;line-height:15px;color:#000;letter-spacing:0.09px;">read</span>
<svg style="left:612.7px;top:296.4px" width="16" height="16"><circle cx="8" cy="8" r="5.8" fill="#fff" stroke="#1c4a80" stroke-width="1.2"/></svg>
<span style="left:631.6px;top:297.5px;font-size:13px;line-height:15px;color:#000;letter-spacing:0.39px;">write</span>
<div style="left:511px;top:282px;width:13px;height:13px;background:#d4d0c8;border:1px solid #8c8c8c"></div>
<span style="left:530.0px;top:283.0px;font-size:13px;line-height:15px;color:#fff;letter-spacing:-0.63px;">DDD Enable</span>
<span style="left:529.0px;top:282.0px;font-size:13px;line-height:15px;color:#8c8c8c;letter-spacing:-0.63px;">DDD Enable</span>
<div style="left:508px;top:323px;width:161px;height:32px;background:#fff"></div>
<div style="left:508px;top:323px;width:160px;height:31px;background:#808080"></div>
<div style="left:509px;top:324px;width:159px;height:30px;background:#fff"></div>
<div style="left:509px;top:324px;width:159px;height:30px;background:#c9c5bd"></div>
<div style="left:515px;top:329px;width:25px;height:20px;background:#c4c4c4;border:1px solid #808080;border-right-color:#fff;border-bottom-color:#fff"></div>
<svg style="left:515px;top:329px" width="25" height="20" viewBox="0 0 25 20"><path d="M5.5 3.5L21 10L5.500 16.500z" fill="#22c000" stroke="#064806" stroke-width="1"/></svg>
<div style="left:556px;top:329px;width:25px;height:20px;background:#c4c4c4;border:1px solid #fff;border-right-color:#808080;border-bottom-color:#808080"></div>
<svg style="left:556px;top:329px" width="25" height="20" viewBox="0 0 25 20"><path d="M20 3.500L4.500 10L20 16.500z" fill="#8a8a8a" stroke="#303030" stroke-width="1"/></svg>
<div style="left:597px;top:329px;width:25px;height:20px;background:#c4c4c4;border:1px solid #fff;border-right-color:#808080;border-bottom-color:#808080"></div>
<svg style="left:597px;top:329px" width="25" height="20" viewBox="0 0 25 20"><path d="M3 4.500L7.500 10L3 15.500z M23 4.500L17.500 10L23 15.500z" fill="#8c8c8c" stroke="#202020" stroke-width="1"/></svg>
<span style="left:605.0px;top:330.9px;font-size:15px;line-height:17px;color:#000;font-weight:bold;letter-spacing:-0.67px;">?</span>
<div style="left:637px;top:329px;width:25px;height:20px;background:#c4c4c4;border:1px solid #fff;border-right-color:#808080;border-bottom-color:#808080"></div>
<svg style="left:637px;top:329px" width="25" height="20" viewBox="0 0 25 20"><path d="M3.500 4.500L8.500 10L3.500 15.500z M21.500 4.500L16.500 10L21.500 15.500z" fill="#8c8c8c" stroke="#202020" stroke-width="1"/><path d="M12.500 3.500V16.500" stroke="#000" stroke-width="2"/></svg>
<div style="left:508px;top:359px;width:161px;height:47px;background:#fff"></div>
<div style="left:508px;top:359px;width:160px;height:46px;background:#808080"></div>
<div style="left:509px;top:360px;width:159px;height:45px;background:#fff"></div>
<div style="left:509px;top:360px;width:159px;height:45px;background:#c9c5bd"></div>
<svg style="left:515.1px;top:363.8px" width="16" height="16"><circle cx="8" cy="8" r="5.8" fill="#fff" stroke="#1c4a80" stroke-width="1.2"/><circle cx="8" cy="8" r="2.4" fill="#000080"/></svg>
<span style="left:535.0px;top:364.5px;font-size:13px;line-height:15px;color:#000;letter-spacing:0.02px;">Ignore</span>
<svg style="left:589.3px;top:363.8px" width="16" height="16"><circle cx="8" cy="8" r="5.8" fill="#fff" stroke="#1c4a80" stroke-width="1.2"/></svg>
<span style="left:609.0px;top:364.5px;font-size:13px;line-height:15px;color:#000;letter-spacing:-0.39px;">Erase</span>
<svg style="left:515.1px;top:383.6px" width="16" height="16"><circle cx="8" cy="8" r="5.8" fill="#fff" stroke="#1c4a80" stroke-width="1.2"/></svg>
<span style="left:535.0px;top:384.5px;font-size:13px;line-height:15px;color:#000;letter-spacing:-0.38px;">Remap</span>
<svg style="left:589.3px;top:383.6px" width="16" height="16"><circle cx="8" cy="8" r="5.8" fill="#fff" stroke="#1c4a80" stroke-width="1.2"/></svg>
<span style="left:609.0px;top:384.5px;font-size:13px;line-height:15px;color:#000;letter-spacing:-0.22px;">Restore</span>
<div style="left:508px;top:409px;width:161px;height:1px;background:#808080"></div>
<div style="left:508px;top:410px;width:161px;height:1px;background:#fff"></div>
<div style="left:512px;top:418px;width:13px;height:13px;background:#fff;border:1px solid #8c8c8c"></div>
<span style="left:530.0px;top:418.0px;font-size:13px;line-height:15px;color:#000;letter-spacing:-0.52px;">Grid</span>
<div style="left:567px;top:413px;width:102px;height:22px;background:#fff"></div>
<div style="left:567px;top:413px;width:101px;height:21px;background:#808080"></div>
<div style="left:568px;top:414px;width:100px;height:20px;background:#000"></div>
<div style="left:569px;top:416px;width:98px;height:16px;background:#0c2c0c"></div>
<span style="left:569.0px;top:413.6px;font-size:20px;line-height:22px;color:#f0f000;font-weight:bold;letter-spacing:0.00px;font-family:'Liberation Mono',monospace;transform-origin:0 100%;transform:scaleY(1.08);">00:00:00</span>
<div style="left:568px;top:414px;width:100px;height:20px;background:linear-gradient(90deg,rgba(0,0,0,.85) 1px,transparent 1px) 0 0/2px 2px,linear-gradient(180deg,rgba(0,0,0,.85) 1px,transparent 1px) 0 0/2px 2px"></div>
<div style="left:679px;top:64px;width:69px;height:405px;background:#a0a2a4"></div>
<div style="left:686px;top:81px;width:53px;height:43px;border:1px solid #600000;border-radius:2px;box-shadow:0 0 0 1px rgba(255,255,255,.35);background:linear-gradient(180deg,#ff3838 0%,#f01818 50%,#c80000 100%)"></div>
<span style="left:697.0px;top:86.8px;font-size:13px;line-height:15px;color:#fff;letter-spacing:-0.39px;">Break</span>
<span style="left:705.0px;top:103.8px;font-size:13px;line-height:15px;color:#fff;letter-spacing:0.02px;">All</span>
<div style="left:703px;top:132px;width:20px;height:9px;background:#8c8c8c;border:1px solid #202020"></div>
<div style="left:686px;top:166px;width:53px;height:22px;border:1px solid #202020;border-radius:2px;box-shadow:0 0 0 1px rgba(255,255,255,.35);background:linear-gradient(180deg,#b4b4b4 0%,#848484 50%,#585858 100%)"></div>
<span style="left:696.0px;top:168.8px;font-size:13px;line-height:15px;color:#fff;letter-spacing:-0.05px;"><u>S</u>leep</span>
<div style="left:686px;top:209px;width:53px;height:24px;border:1px solid #202020;border-radius:2px;box-shadow:0 0 0 1px rgba(255,255,255,.35);background:linear-gradient(180deg,#b4b4b4 0%,#848484 50%,#585858 100%)"></div>
<span style="left:695.0px;top:212.8px;font-size:13px;line-height:15px;color:#fff;letter-spacing:-0.19px;">Re<u>c</u>all</span>
<div style="left:685px;top:330px;width:25px;height:13px;background:#8a8a8a;border:1px solid #282828"></div>
<div style="left:717px;top:330px;width:25px;height:13px;background:#8a8a8a;border:1px solid #282828"></div>
<span style="left:688.0px;top:343.6px;font-size:13px;line-height:15px;color:#000;letter-spacing:-1.20px;">Rd</span>
<span style="left:719.4px;top:343.6px;font-size:13px;line-height:15px;color:#000;letter-spacing:0.37px;">Wrt</span>
<div style="left:686px;top:367px;width:53px;height:23px;border:1px solid #400000;border-radius:2px;box-shadow:0 0 0 1px rgba(255,255,255,.35);background:linear-gradient(180deg,#c80808 0%,#980000 50%,#600000 100%)"></div>
<span style="left:695.0px;top:370.6px;font-size:13px;line-height:15px;color:#fff;letter-spacing:-0.23px;">Passp</span>
<div style="left:686px;top:413px;width:53px;height:23px;border:1px solid #000040;border-radius:2px;box-shadow:0 0 0 1px rgba(255,255,255,.35);background:linear-gradient(180deg,#1010c8 0%,#000098 50%,#000058 100%)"></div>
<span style="left:694.0px;top:417.0px;font-size:13px;line-height:15px;color:#ffff00;letter-spacing:0.03px;"><u>P</u>ower</span>
<div style="left:679px;top:472px;width:70px;height:78px;background:#fff"></div>
<div style="left:679px;top:472px;width:69px;height:77px;background:#808080"></div>
<div style="left:680px;top:473px;width:67px;height:75px;background:#fff"></div>
<div style="left:681px;top:474px;width:66px;height:74px;background:#d4d0c8"></div>
<div style="left:684px;top:479px;width:13px;height:13px;background:#fff;border:1px solid #8c8c8c"></div>
<svg style="left:684px;top:479px" width="13" height="13"><path d="M3 6l2.500 2.700l4.700-5" stroke="#000080" stroke-width="2.100" fill="none"/></svg>
<span style="left:702.2px;top:478.1px;font-size:14px;line-height:16px;color:#000080;font-weight:bold;letter-spacing:-0.76px;">sound</span>
<span style="left:684.6px;top:504.9px;font-size:10.5px;line-height:12.5px;color:#000;letter-spacing:-0.14px;">API number</span>
<div style="left:683px;top:519px;width:62px;height:25px;background:#fff;border:1px solid #808080"></div>
<div style="left:698px;top:519px;width:1px;height:25px;background:#808080"></div>
<div style="left:729px;top:519px;width:1px;height:25px;background:#808080"></div>
<div style="left:684px;top:520px;width:14px;height:23px;background:#d4d0c8"></div>
<div style="left:730px;top:520px;width:14px;height:23px;background:#d4d0c8"></div>
<div style="left:687px;top:529.5px;width:9px;height:2.0px;background:#000080"></div>
<div style="left:733px;top:529.5px;width:8px;height:2.0px;background:#000080"></div>
<div style="left:736px;top:526.5px;width:2px;height:8.0px;background:#000080"></div>
<span style="left:710.0px;top:522.8px;font-size:13.5px;line-height:15.5px;color:#000080;font-weight:bold;letter-spacing:0.00px;">1</span>
<div style="left:749px;top:0px;width:2px;height:551px;background:#d4d0c8"></div>
<div style="left:0px;top:551px;width:751px;height:1px;background:#686868"></div>
<div style="left:0px;top:552px;width:751px;height:2px;background:#484848"></div>
<div style="left:0px;top:446px;width:677px;height:105px;background:#fff"></div>
<div style="left:0px;top:446px;width:676px;height:104px;background:#808080"></div>
<div style="left:1px;top:447px;width:675px;height:103px;background:#404040"></div>
<div style="left:2px;top:448px;width:673px;height:101px;background:#e7fde7"></div>
<div style="left:2px;top:466px;width:658px;height:1px;background:#d0d4c8"></div>
<div style="left:2px;top:483px;width:658px;height:1px;background:#d0d4c8"></div>
<div style="left:2px;top:500px;width:658px;height:1px;background:#d0d4c8"></div>
<div style="left:2px;top:517px;width:658px;height:1px;background:#d0d4c8"></div>
<div style="left:67px;top:448px;width:1px;height:85px;background:#d0d4c8"></div>
<span style="left:8.0px;top:451.0px;font-size:13px;line-height:15px;color:#000;letter-spacing:0.11px;">23:36:31</span>
<span style="left:73.4px;top:451.0px;font-size:13px;line-height:15px;color:#000;letter-spacing:-0.21px;">Get passport... OK</span>
<span style="left:8.0px;top:468.0px;font-size:13px;line-height:15px;color:#000;letter-spacing:0.11px;">23:36:32</span>
<span style="left:73.4px;top:468.0px;font-size:13px;line-height:15px;color:#000;letter-spacing:-0.17px;">Recallibration... OK</span>
<span style="left:8.0px;top:485.0px;font-size:13px;line-height:15px;color:#000;letter-spacing:0.11px;">23:36:32</span>
<span style="left:73.4px;top:485.0px;font-size:13px;line-height:15px;color:#000;letter-spacing:-0.11px;">Starting Reading, LBA=0..490350671, sequential access, timeout 10000ms</span>
<span style="left:12.5px;top:502.0px;font-size:13px;line-height:15px;color:#000;letter-spacing:0.09px;">0:20:10</span>
<span style="left:73.6px;top:501.4px;font-size:17px;line-height:19px;color:#0000ff;letter-spacing:1.30px;">*****</span>
<span style="left:113.6px;top:502.0px;font-size:13px;line-height:15px;color:#0000ff;letter-spacing:0.07px;"> Scan results: no warnings, no errors </span>
<span style="left:331.8px;top:501.4px;font-size:17px;line-height:19px;color:#0000ff;letter-spacing:1.30px;">*****</span>
<div style="left:659px;top:448px;width:16px;height:85px;background:repeating-conic-gradient(#fff 0% 25%, #d4d0c8 0% 50%) 0 0/2px 2px"></div>
<div style="left:659px;top:448px;width:16px;height:16px;background:#404040"></div>
<div style="left:659px;top:448px;width:15px;height:15px;background:#fff"></div>
<div style="left:660px;top:449px;width:14px;height:14px;background:#808080"></div>
<div style="left:660px;top:449px;width:13px;height:13px;background:#d4d0c8"></div>
<div style="left:659px;top:517px;width:16px;height:16px;background:#404040"></div>
<div style="left:659px;top:517px;width:15px;height:15px;background:#fff"></div>
<div style="left:660px;top:518px;width:14px;height:14px;background:#808080"></div>
<div style="left:660px;top:518px;width:13px;height:13px;background:#d4d0c8"></div>
<div style="left:659px;top:509px;width:16px;height:8px;background:#404040"></div>
<div style="left:659px;top:509px;width:15px;height:7px;background:#fff"></div>
<div style="left:660px;top:510px;width:14px;height:6px;background:#808080"></div>
<div style="left:660px;top:510px;width:13px;height:5px;background:#d4d0c8"></div>
<svg style="left:659px;top:448px" width="16" height="85"><path d="M4 10h7L7.500 6z M4 75h7L7.500 79z" fill="#000"/></svg>
<div style="left:2px;top:533px;width:657px;height:16px;background:repeating-conic-gradient(#fff 0% 25%, #d4d0c8 0% 50%) 0 0/2px 2px"></div>
<div style="left:2px;top:533px;width:15px;height:16px;background:#404040"></div>
<div style="left:2px;top:533px;width:14px;height:15px;background:#fff"></div>
<div style="left:3px;top:534px;width:13px;height:14px;background:#808080"></div>
<div style="left:3px;top:534px;width:12px;height:13px;background:#d4d0c8"></div>
<div style="left:644px;top:533px;width:15px;height:16px;background:#404040"></div>
<div style="left:644px;top:533px;width:14px;height:15px;background:#fff"></div>
<div style="left:645px;top:534px;width:13px;height:14px;background:#808080"></div>
<div style="left:645px;top:534px;width:12px;height:13px;background:#d4d0c8"></div>
<div style="left:17px;top:533px;width:475px;height:16px;background:#404040"></div>
<div style="left:17px;top:533px;width:474px;height:15px;background:#fff"></div>
<div style="left:18px;top:534px;width:473px;height:14px;background:#808080"></div>
<div style="left:18px;top:534px;width:472px;height:13px;background:#d4d0c8"></div>
<svg style="left:2px;top:533px" width="658" height="16"><path d="M10 4v8L6 8z M648.500 4v8L652.500 8z" fill="#000"/></svg>
<div style="left:659px;top:533px;width:16px;height:16px;background:#d4d0c8"></div>
</div></body></html>
